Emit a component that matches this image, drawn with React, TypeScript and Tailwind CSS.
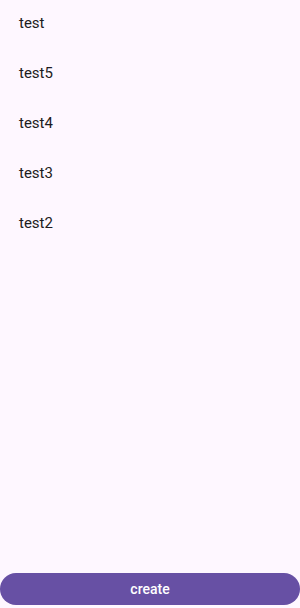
const items = ["test", "test5", "test4", "test3", "test2"];

export default function App() {
  return (
    <div
      className="flex h-[608px] w-[300px] flex-col bg-[#fef7ff]"
      style={{ fontFamily: "Roboto, 'Liberation Sans', sans-serif" }}
    >
      <div className="flex flex-1 flex-col gap-[6px] pt-[1px]">
        {items.map((item) => (
          <div key={item} className="flex h-[44px] items-center px-[19px] text-[15px] text-[#1d1b20]">
            {item}
          </div>
        ))}
      </div>
      <button
        type="button"
        className="mb-[3px] h-[32px] w-full rounded-full bg-[#6750a4] text-[14px] font-medium text-white"
      >
        create
      </button>
    </div>
  );
}
